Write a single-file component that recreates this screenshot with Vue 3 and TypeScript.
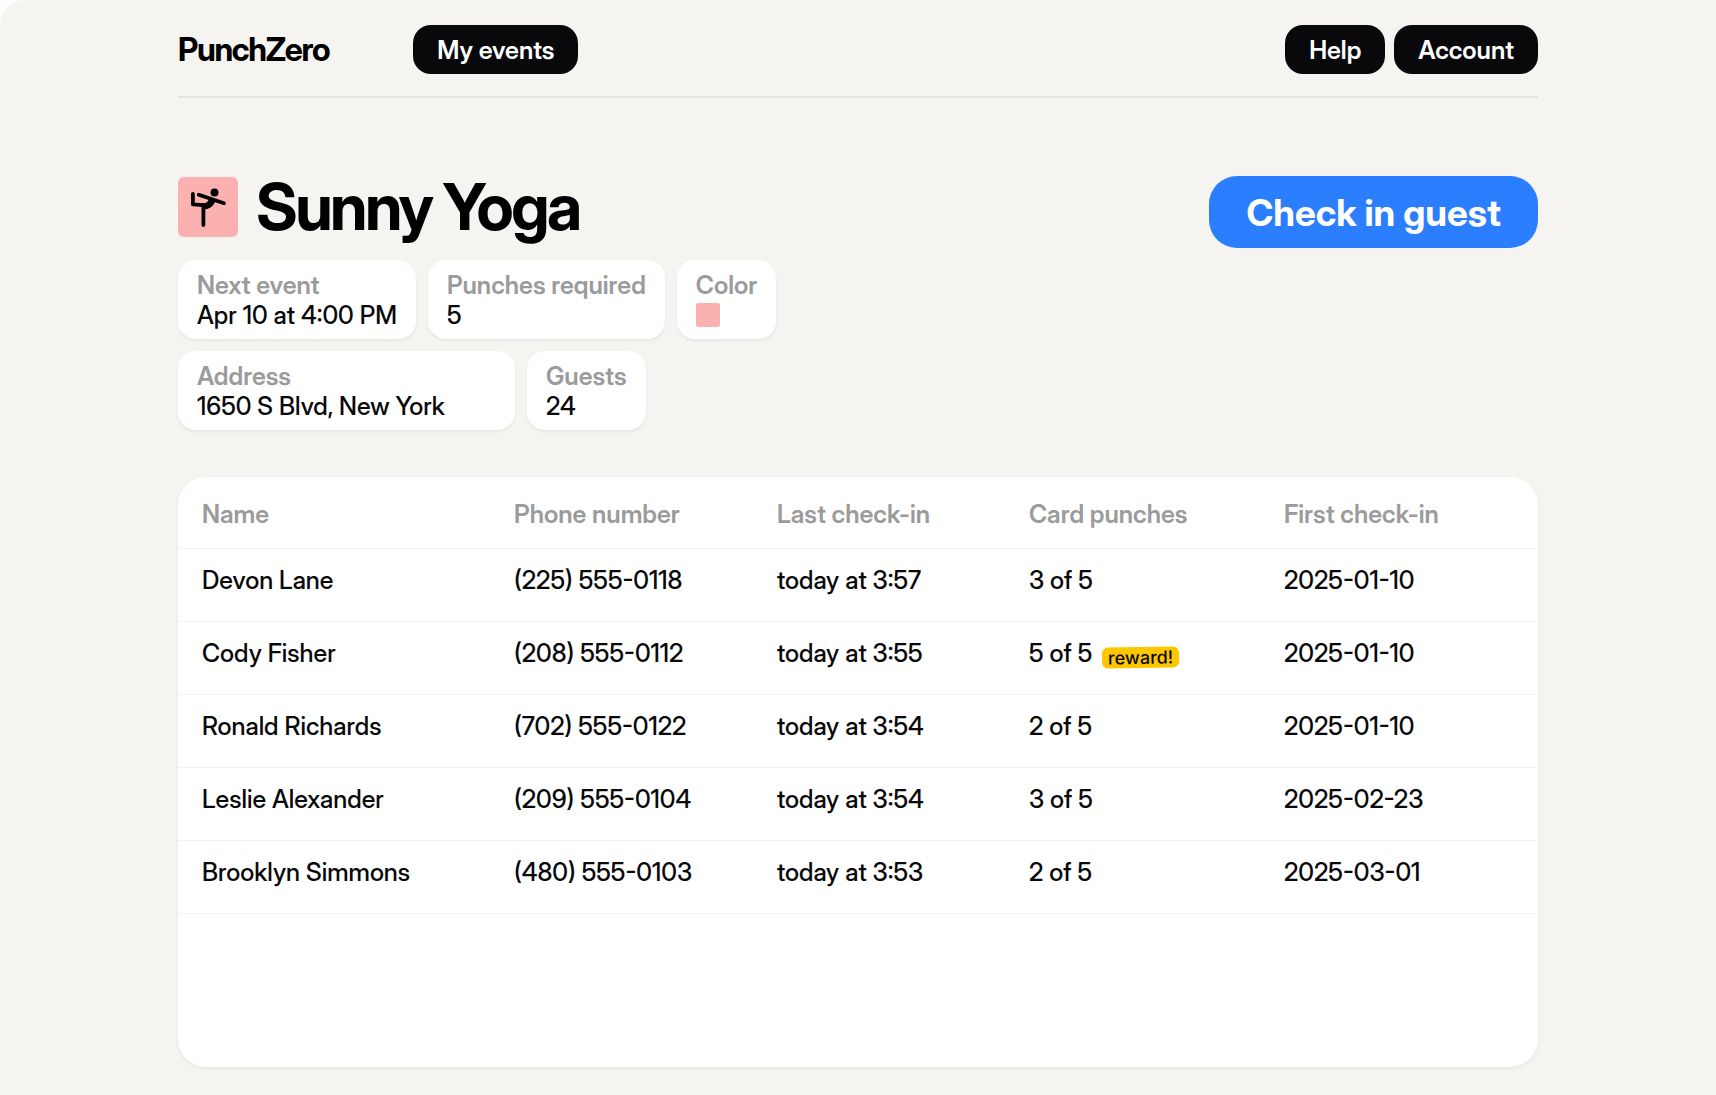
<script setup lang="ts">
interface Guest {
  name: string
  phone: string
  last: string
  punches: number
  first: string
}

const required = 5

const columns: string[] = ['Name', 'Phone number', 'Last check-in', 'Card punches', 'First check-in']

const guests: Guest[] = [
  { name: 'Devon Lane', phone: '(225) 555-0118', last: 'today at 3:57', punches: 3, first: '2025-01-10' },
  { name: 'Cody Fisher', phone: '(208) 555-0112', last: 'today at 3:55', punches: 5, first: '2025-01-10' },
  { name: 'Ronald Richards', phone: '(702) 555-0122', last: 'today at 3:54', punches: 2, first: '2025-01-10' },
  { name: 'Leslie Alexander', phone: '(209) 555-0104', last: 'today at 3:54', punches: 3, first: '2025-02-23' },
  { name: 'Brooklyn Simmons', phone: '(480) 555-0103', last: 'today at 3:53', punches: 2, first: '2025-03-01' },
]
</script>

<template>
  <div class="page">
    <div class="container">
      <header class="topbar">
        <span class="logo">PunchZero</span>
        <nav class="nav" aria-label="Main">
          <button type="button" class="pill">My events</button>
          <div class="nav-end">
            <button type="button" class="pill">Help</button>
            <button type="button" class="pill">Account</button>
          </div>
        </nav>
      </header>

      <main>
        <section class="intro">
          <div class="summary">
            <div class="heading">
              <svg class="badge-icon" viewBox="0 0 60 60" aria-hidden="true">
                <rect width="60" height="60" rx="6" fill="#fcb1b1" />
                <circle cx="36.5" cy="15.6" r="4" />
                <g fill="none" stroke="#000" stroke-width="3.8" stroke-linecap="round" stroke-linejoin="round">
                  <path d="M20.8 17.8 46 26.2" />
                  <path d="M14.9 17V27.4L25 28.2" />
                  <path d="M25.4 29V48" />
                </g>
                <path d="M24 26.2C28 26.4 29.5 25.6 31 22L37.5 23.5C36 28.5 32.5 31.6 27.3 32.3L24 31Z" />
              </svg>
              <h1 class="title">Sunny Yoga</h1>
            </div>
            <dl class="facts">
              <div class="fact">
                <dt>Next event</dt>
                <dd>Apr 10 at 4:00 PM</dd>
              </div>
              <div class="fact">
                <dt>Punches required</dt>
                <dd>{{ required }}</dd>
              </div>
              <div class="fact">
                <dt>Color</dt>
                <dd><span class="swatch" role="img" aria-label="Pink"></span></dd>
              </div>
            </dl>
            <dl class="facts">
              <div class="fact address">
                <dt>Address</dt>
                <dd>1650 S Blvd, New York</dd>
              </div>
              <div class="fact">
                <dt>Guests</dt>
                <dd>24</dd>
              </div>
            </dl>
          </div>
          <button type="button" class="primary">Check in guest</button>
        </section>

        <section class="panel">
          <table class="guests">
            <colgroup>
              <col class="col-name" />
              <col class="col-phone" />
              <col class="col-last" />
              <col class="col-punches" />
              <col class="col-first" />
            </colgroup>
            <thead>
              <tr>
                <th v-for="column in columns" :key="column" scope="col">{{ column }}</th>
              </tr>
            </thead>
            <tbody>
              <tr v-for="guest in guests" :key="guest.phone">
                <td>{{ guest.name }}</td>
                <td>{{ guest.phone }}</td>
                <td>{{ guest.last }}</td>
                <td>
                  <div class="punches">
                    <span>{{ guest.punches }} of {{ required }}</span>
                    <span v-if="guest.punches === required" class="reward">reward!</span>
                  </div>
                </td>
                <td>{{ guest.first }}</td>
              </tr>
            </tbody>
          </table>
        </section>
      </main>
    </div>
  </div>
</template>

<style>
body {
  margin: 0;
  background: #fff;
}
</style>

<style scoped>
.page {
  box-sizing: border-box;
  min-height: 100vh;
  padding: 25px 24px 28px;
  background: #f5f4f0;
  border-top-left-radius: 24px;
  color: #09090b;
  font-family: 'Inter Display', Inter, 'Liberation Sans', sans-serif;
  font-size: 25px;
  font-weight: 500;
  line-height: 30px;
}

.container {
  max-width: 1360px;
  margin: 0 auto;
}

.topbar {
  display: flex;
  align-items: center;
  gap: 84px;
  padding-bottom: 22px;
  border-bottom: 2px solid #e4e4e2;
}

.logo {
  font-size: 32px;
  font-weight: 700;
  letter-spacing: -0.04em;
  color: #000;
}

.nav {
  flex: 1;
  display: flex;
  justify-content: space-between;
}

.nav-end {
  display: flex;
  gap: 9px;
}

.pill,
.primary {
  border: 0;
  color: #fff;
  font-family: inherit;
  cursor: pointer;
}

.pill {
  height: 49px;
  padding: 0 24px;
  border-radius: 18px;
  background: #09090b;
  font-size: 25px;
  font-weight: 600;
}

.intro {
  display: flex;
  justify-content: space-between;
  align-items: flex-start;
  padding-top: 78px;
}

.heading {
  display: flex;
  align-items: center;
  gap: 18px;
  height: 62px;
  margin-bottom: 22px;
}

.badge-icon {
  width: 60px;
  height: 60px;
}

.title {
  margin: 0;
  color: #000;
  font-size: 64px;
  font-weight: 700;
  line-height: 64px;
  letter-spacing: -0.04em;
}

.facts {
  display: flex;
  gap: 12px;
  margin: 0 0 12px;
}

.fact {
  padding: 10px 19px 9px;
  border-radius: 18px;
  background: #fff;
  box-shadow: 0 2px 3px rgba(0, 0, 0, 0.06);
}

.address {
  min-width: 299px;
}

dt,
th {
  color: #9b9b9b;
  font-weight: 600;
}

dd {
  margin: 0;
}

.swatch {
  display: block;
  width: 24px;
  height: 24px;
  margin: 3px 0;
  border-radius: 2px;
  background: #fcb1b1;
}

.primary {
  height: 72px;
  padding: 0 37px;
  border-radius: 28px;
  background: #2b7fff;
  font-size: 37px;
  font-weight: 700;
}

.panel {
  min-height: 590px;
  margin-top: 35px;
  border-radius: 28px;
  background: #fff;
  box-shadow: 0 2px 4px rgba(0, 0, 0, 0.06);
}

.guests {
  width: 100%;
  border-collapse: collapse;
  table-layout: fixed;
}

.col-name {
  width: 312px;
}

.col-phone {
  width: 263px;
}

.col-last {
  width: 252px;
}

.col-punches {
  width: 255px;
}

.col-first {
  width: 278px;
}

th,
td {
  padding: 16px 0 26px 24px;
  border-bottom: 1px solid #f2f2f1;
  text-align: left;
}

th {
  padding: 22px 0 19px 24px;
}

.punches {
  display: flex;
  align-items: flex-start;
  gap: 10px;
}

.reward {
  margin-top: 9px;
  padding: 0 6px;
  border-radius: 6px;
  background: #fdc700;
  font-family: Inter, 'Liberation Sans', sans-serif;
  font-size: 18px;
  line-height: 21px;
  transform: rotate(-1deg);
}
</style>
